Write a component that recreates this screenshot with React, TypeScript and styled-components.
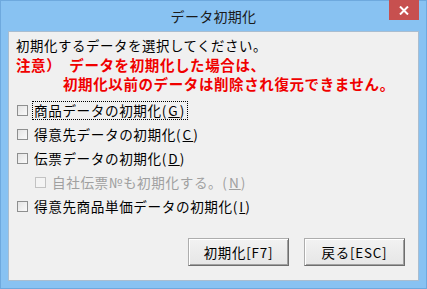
import React from "react";
import styled, { createGlobalStyle } from "styled-components";

const Global = createGlobalStyle`
  html, body { margin: 0; padding: 0; background: #ffffff; }
  body { font-family: "Noto Sans CJK JP", "Noto Sans", sans-serif; }
`;

const Window = styled.div`
  box-sizing: border-box;
  width: 427px;
  height: 289px;
  background: #88c2f2;
  border: 1px solid #6ea9de;
  display: flex;
  flex-direction: column;
  padding: 0 7px 7px 7px;
`;

const TitleBar = styled.div`
  height: 30px;
  display: grid;
  grid-template-columns: 1fr auto 1fr;
  align-items: start;
`;

const Title = styled.div`
  grid-column: 2;
  font-size: 14px;
  line-height: 30px;
  color: #1a1a1a;
  letter-spacing: 0.3px;
`;

const CloseButton = styled.div`
  grid-column: 3;
  justify-self: end;
  width: 30px;
  height: 20px;
  margin-top: -1px;
  background: #c7504f;
  display: flex;
  align-items: center;
  justify-content: center;
`;

const Content = styled.div`
  flex: 1;
  box-sizing: border-box;
  background: #f0f0f0;
  border: 1px solid #a9bdd0;
  display: flex;
  flex-direction: column;
  padding: 4px 0 14px 7px;
  color: #000;
`;

const Line = styled.div<{ $red?: boolean; $indent?: number }>`
  height: 19px;
  line-height: 19px;
  white-space: nowrap;
  font-size: ${(p) => (p.$red ? "14.5px" : "13.4px")};
  font-weight: ${(p) => (p.$red ? 700 : 400)};
  letter-spacing: 0.6px;
  color: ${(p) => (p.$red ? "#f00000" : "#000")};
  padding-left: ${(p) => p.$indent ?? 0}px;
`;

const NoteLabel = styled.span`
  display: inline-block;
  margin-right: 8px;
`;

const List = styled.div`
  margin-top: 5px;
  display: flex;
  flex-direction: column;
`;

const Row = styled.div<{ $indent?: number; $disabled?: boolean }>`
  height: 24px;
  display: flex;
  align-items: center;
  gap: 4px;
  padding-left: ${(p) => 1 + (p.$indent ?? 0)}px;
  font-size: 13.6px;
  letter-spacing: 0.6px;
  white-space: nowrap;
  color: ${(p) => (p.$disabled ? "#a0a0a0" : "#000")};
`;

const Box = styled.span<{ $disabled?: boolean }>`
  box-sizing: border-box;
  width: 11px;
  height: 11px;
  border: 1px solid ${(p) => (p.$disabled ? "#c2c2c2" : "#8e8f8f")};
  background: ${(p) =>
    p.$disabled ? "#f4f4f4" : "linear-gradient(135deg, #e4e4e4 0%, #fafafa 100%)"};
  flex: none;
`;

const Label = styled.span<{ $focus?: boolean }>`
  line-height: 17px;
  padding: 0 1px;
  border: 1px dotted ${(p) => (p.$focus ? "#000" : "transparent")};
`;

const Half = styled.span`
  letter-spacing: 2px;
`;

const Key = styled.span`
  text-decoration: underline;
  text-underline-offset: 1px;
`;

const ButtonRow = styled.div`
  margin-top: auto;
  display: flex;
  justify-content: flex-end;
  gap: 15px;
  padding-right: 13px;
`;

const Button = styled.div`
  box-sizing: border-box;
  width: 101px;
  height: 28px;
  display: flex;
  align-items: center;
  justify-content: center;
  font-size: 13.4px;
  letter-spacing: 0.8px;
  color: #000;
  background: linear-gradient(#f2f2f2, #e6e6e6);
  border: 1px solid #adadad;
  border-right-color: #6e6e6e;
  border-bottom-color: #6e6e6e;
  box-shadow: inset 1px 1px 0 #ffffff, inset -1px -1px 0 #a0a0a0;
`;

const Acc = ({ k }: { k: string }) => (
  <Half>
    (<Key>{k}</Key>)
  </Half>
);

export default function App() {
  return (
    <>
      <Global />
      <Window>
        <TitleBar>
          <Title>データ初期化</Title>
          <CloseButton>
            <svg width="10" height="9" viewBox="0 0 10 9">
              <path d="M1 0.5 L9 8.5 M9 0.5 L1 8.5" stroke="#ffffff" strokeWidth="2" />
            </svg>
          </CloseButton>
        </TitleBar>
        <Content>
          <Line>初期化するデータを選択してください。</Line>
          <Line $red>
            <NoteLabel>注意）</NoteLabel>データを初期化した場合は、
          </Line>
          <Line $red $indent={47}>
            初期化以前のデータは削除され復元できません。
          </Line>
          <List>
            <Row>
              <Box />
              <Label $focus>
                商品データの初期化<Acc k="G" />
              </Label>
            </Row>
            <Row>
              <Box />
              <Label>
                得意先データの初期化<Acc k="C" />
              </Label>
            </Row>
            <Row>
              <Box />
              <Label>
                伝票データの初期化<Acc k="D" />
              </Label>
            </Row>
            <Row $indent={18} $disabled>
              <Box $disabled />
              <Label>
                自社伝票№も初期化する。<Acc k="N" />
              </Label>
            </Row>
            <Row>
              <Box />
              <Label>
                得意先商品単価データの初期化<Acc k="I" />
              </Label>
            </Row>
          </List>
          <ButtonRow>
            <Button>初期化[F7]</Button>
            <Button>戻る[ESC]</Button>
          </ButtonRow>
        </Content>
      </Window>
    </>
  );
}
